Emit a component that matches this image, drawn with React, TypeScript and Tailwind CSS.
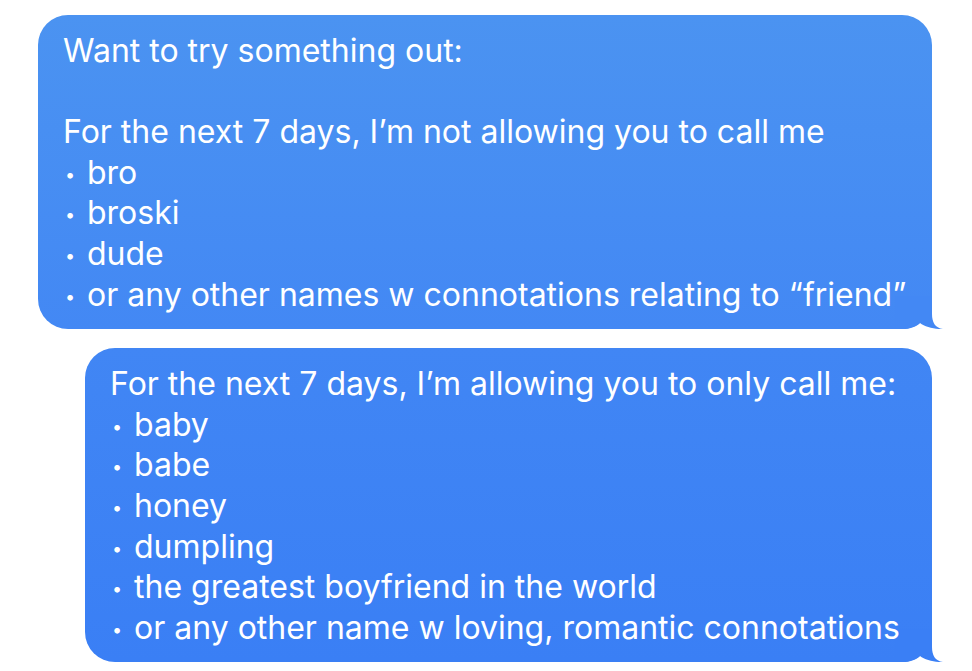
const first = [
  "Want to try something out:",
  "",
  "For the next 7 days, I\u2019m not allowing you to call me",
  "- bro",
  "- broski",
  "- dude",
  "- or any other names w connotations relating to \u201Cfriend\u201D",
];

const second = [
  "For the next 7 days, I\u2019m allowing you to only call me:",
  "- baby",
  "- babe",
  "- honey",
  "- dumpling",
  "- the greatest boyfriend in the world",
  "- or any other name w loving, romantic connotations",
];

function Tail({ color }: { color: string }) {
  return (
    <svg
      width="48"
      height="33"
      viewBox="0 0 48 33"
      className="absolute bottom-0 right-[-11px]"
    >
      <path
        d="M0 0 L37 0 L37 18 C37 26 40 32 48 33 C40 33.5 30 31 25 27 C21 31 14 33 8 33 L0 33 Z"
        fill={color}
      />
    </svg>
  );
}

function Line({ text }: { text: string }) {
  if (!text) return <div className="h-[40.6px]">{"\u00A0"}</div>;
  const bullet = text.startsWith("- ");
  return (
    <div className="relative h-[40.6px] whitespace-nowrap leading-[40.6px]">
      {bullet && (
        <span className="relative -top-[3px] inline-block w-[24px] pl-[2px] text-[18px]">
          {"\u2022"}
        </span>
      )}
      {bullet ? text.slice(2) : text}
    </div>
  );
}

function Bubble({
  lines,
  className,
  tail,
}: {
  lines: string[];
  className: string;
  tail: string;
}) {
  return (
    <div className={`relative rounded-[30px] pl-[25px] pr-4 pt-[16px] pb-[14px] ${className}`}>
      {/* tail sits under the text */}
      <Tail color={tail} />
      {lines.map((l, i) => (
        <Line key={i} text={l} />
      ))}
    </div>
  );
}

export default function App() {
  return (
    <div className="min-h-screen w-full overflow-hidden bg-white pt-[15px] font-['Inter','Noto_Sans',sans-serif] text-[32px] text-white">
      <div className="flex flex-col items-end gap-[19px] pr-[40px]">
        <Bubble
          lines={first}
          tail="#4388f4"
          className="w-[894px] bg-gradient-to-b from-[#4b93f1] to-[#4388f4]"
        />
        <Bubble
          lines={second}
          tail="#3a7ff5"
          className="w-[847px] bg-gradient-to-b from-[#4186f4] to-[#3a7ff5]"
        />
      </div>
    </div>
  );
}
